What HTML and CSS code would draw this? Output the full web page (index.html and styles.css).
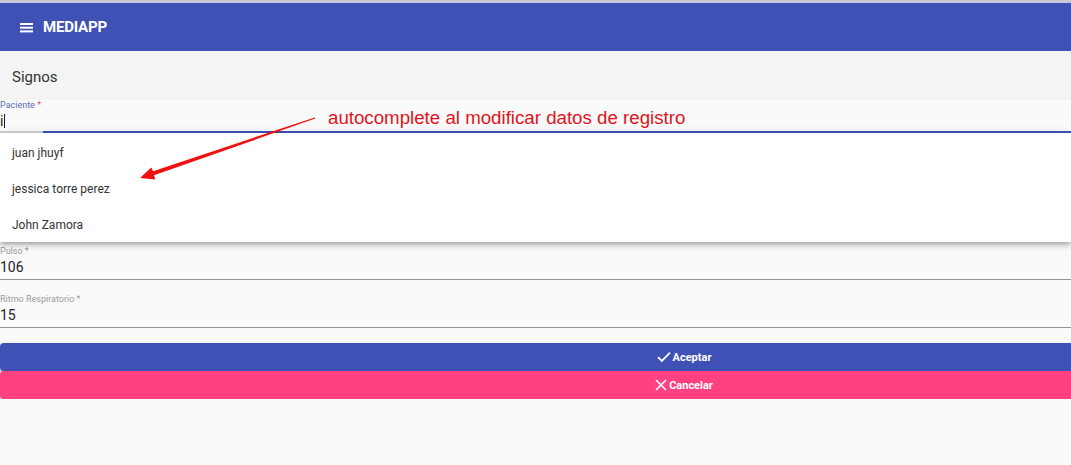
FILE: index.html
```html
<!DOCTYPE html>
<html lang="es">
<head>
<meta charset="utf-8">
<title>MEDIAPP</title>
<link rel="stylesheet" href="styles.css">
</head>
<body>
<div class="viewport">
<div class="page">
  <div class="top-strip"></div>
  <header class="toolbar">
    <svg class="menu-icon" width="14" height="10" viewBox="0 0 14 10"><rect x="0" y="0" width="13" height="2" fill="#fff"/><rect x="0" y="3.7" width="13" height="2" fill="#fff"/><rect x="0" y="7.4" width="13" height="2" fill="#fff"/></svg>
    <span class="brand">MEDIAPP</span>
  </header>
  <div class="section-title">Signos</div>
  <form class="form">
    <div class="field-wrap">
      <div class="field field-active">
        <label class="label label-active">Paciente <span class="req">*</span></label>
        <div class="value"><span class="typed">i</span><span class="caret"></span></div>
        <div class="underline"></div>
      </div>
      <div class="panel">
        <div class="option">juan jhuyf</div>
        <div class="option">jessica torre perez</div>
        <div class="option">John Zamora</div>
      </div>
    </div>
    <div class="hidden-area"></div>
    <div class="field">
      <label class="label">Pulso *</label>
      <div class="value">106</div>
    </div>
    <div class="field">
      <label class="label">Ritmo Respiratorio *</label>
      <div class="value">15</div>
    </div>
    <div class="buttons">
      <button type="button" class="btn btn-primary">
        <svg width="14" height="12" viewBox="0 0 14 12"><path d="M1 6.2 L4.8 10 L13 1.6" fill="none" stroke="#fff" stroke-width="1.8"/></svg>
        <span>Aceptar</span>
      </button>
      <button type="button" class="btn btn-accent">
        <svg width="12" height="12" viewBox="0 0 12 12"><path d="M1 1 L11 11 M11 1 L1 11" fill="none" stroke="#fff" stroke-width="1.6"/></svg>
        <span>Cancelar</span>
      </button>
    </div>
  </form>
</div>
</div>
<div class="note">autocomplete al modificar datos de registro</div>
<svg class="arrow" width="1071" height="465" viewBox="0 0 1071 465">
  <polygon fill="#f01010" points="315.2,118.6 314.8,117.4 153,171.2 151.3,167.6 140,178 155.3,179.4 154,175.2"/>
</svg>
</body>
</html>
```
FILE: styles.css
```css
html, body {
  margin: 0;
  padding: 0;
  background: #fafafa;
  overflow: hidden;
  font-family: Roboto, "Liberation Sans", Arial, sans-serif;
}
.viewport {
  width: 100%;
  overflow: hidden;
}
.page {
  width: 1368px;
}
.top-strip {
  height: 3px;
  background: #c6c9d6;
}
.toolbar {
  height: 48px;
  background: #3f51b5;
  display: flex;
  align-items: center;
  padding-left: 20px;
  color: #fff;
}
.menu-icon {
  margin-top: 2px;
  margin-right: 9px;
}
.brand {
  font-size: 15px;
  font-weight: 700;
  letter-spacing: -0.2px;
}
.section-title {
  height: 49px;
  background: #f4f4f4;
  display: flex;
  align-items: center;
  padding-left: 12px;
  font-size: 15px;
  color: #333;
  box-sizing: border-box;
  padding-top: 2px;
}
.form {
  display: flex;
  flex-direction: column;
}
.field-wrap {
  position: relative;
}
.field {
  display: flex;
  flex-direction: column;
  padding-top: 1px;
  padding-bottom: 2px;
  border-bottom: 1px solid #949494;
  margin-bottom: 12px;
}
.field-active {
  padding-top: 0;
  padding-bottom: 0;
  border-bottom: none;
  margin-bottom: 0;
  height: 33px;
}
.label {
  font-size: 9px;
  line-height: 12px;
  color: #9a9a9a;
}
.label-active {
  color: #5c6bc0;
  line-height: 11px;
}
.req {
  color: #ff4081;
}
.value {
  font-size: 14px;
  line-height: 20px;
  color: #222;
  display: flex;
  align-items: center;
}
.typed {
  font-size: 14px;
  color: #222;
}
.caret {
  width: 1px;
  height: 14px;
  background: #222;
  margin-left: 1px;
}
.underline {
  height: 2px;
  background: linear-gradient(to right, #cfd0d8 43px, #3f51b5 43px);
}
.panel {
  position: absolute;
  top: 33px;
  left: 0;
  width: 1071px;
  height: 109px;
  padding-top: 2px;
  box-sizing: border-box;
  background: #fff;
  box-shadow: 0 2px 4px -1px rgba(0,0,0,.2), 0 4px 5px 0 rgba(0,0,0,.14), 0 1px 10px 0 rgba(0,0,0,.12);
  z-index: 2;
}
.option {
  height: 36px;
  display: flex;
  align-items: center;
  padding-left: 12px;
  font-size: 12px;
  color: #333;
}
.hidden-area {
  height: 111px;
}
.buttons {
  display: flex;
  flex-direction: column;
  margin-top: 3px;
}
.btn {
  height: 28px;
  border: none;
  border-radius: 4px;
  display: flex;
  align-items: center;
  justify-content: center;
  gap: 2px;
  color: #fff;
  font-family: Roboto, "Liberation Sans", Arial, sans-serif;
  font-size: 11px;
  font-weight: 700;
  padding: 0;
  box-shadow: 0 2px 2px 0 rgba(0,0,0,.14), 0 1px 3px 0 rgba(0,0,0,.2);
}
.btn-primary {
  background: #3f51b5;
}
.btn-accent {
  background: #ff4081;
}
.note {
  position: absolute;
  left: 328px;
  top: 107px;
  font-family: "Liberation Sans", Arial, sans-serif;
  font-size: 18.7px;
  color: #e0141c;
  z-index: 3;
}
.arrow {
  position: absolute;
  left: 0;
  top: 0;
  z-index: 3;
  pointer-events: none;
}
```
